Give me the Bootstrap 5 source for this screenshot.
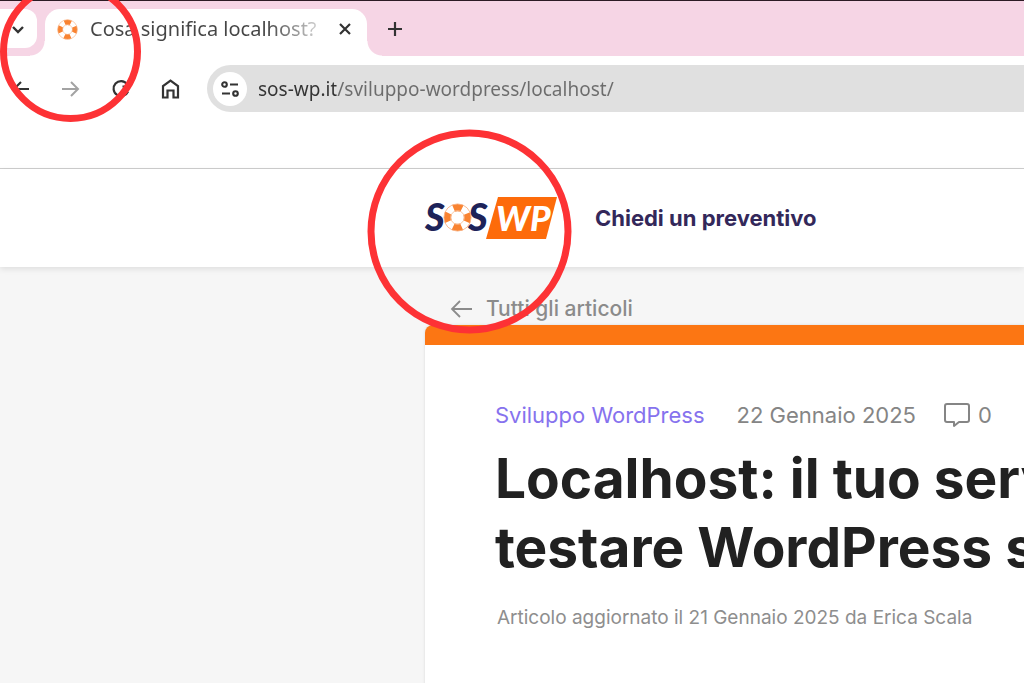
<!DOCTYPE html>
<html lang="it">
<head>
<meta charset="utf-8">
<meta name="viewport" content="width=device-width, initial-scale=1">
<title>Cosa significa localhost?</title>
<link href="https://cdn.jsdelivr.net/npm/bootstrap@5.3.0/dist/css/bootstrap.min.css" rel="stylesheet">
<style>
:root { --pink: #f6d5e5; --orange: #fc7613; --column: 41.5%; }
body { font-family: Inter, "Liberation Sans", sans-serif; background: #f6f6f6; color: #212121; overflow: hidden; }
button { padding: 0; border: 0; background: none; color: #333; line-height: 0; }
a { text-decoration: none; }
svg { display: block; flex: none; overflow: visible; }
.browser-text { font-family: "Noto Sans", "Open Sans", sans-serif; }

.tab-strip { height: 56px; background: var(--pink); border-top: 1px solid #2d1b25; padding-top: 8px; }
.tab-search { position: relative; z-index: 1; width: 37px; height: 39px; background: #fff; border-radius: 0 12px 12px 0; }
.open-tab { position: relative; width: 322px; margin-left: 8px; padding: 0 12px 7px; background: #fff; border-radius: 15px 15px 0 0; }
.open-tab::before, .open-tab::after { content: ""; position: absolute; bottom: 0; width: 15px; height: 15px; }
.open-tab::before { right: 100%; background: radial-gradient(circle at 0 0, var(--pink) 14px, #fff 15px); }
.open-tab::after { left: 100%; background: radial-gradient(circle at 100% 0, var(--pink) 14px, #fff 15px); }
.tab-title { font-size: 20px; line-height: 40px; white-space: nowrap; color: transparent; background: linear-gradient(90deg, #454545 78%, #d0d0d0 100%); -webkit-background-clip: text; background-clip: text; }

.toolbar { height: 113px; padding: 9px 0 0 9px; border-bottom: 1px solid #cfcfcf; }
.nav-buttons { gap: 26px; margin-right: 24px; }
.address { height: 47px; padding-left: 6px; background: #e0e0e0; border-radius: 24px 0 0 24px; }
.site-info { width: 34px; height: 34px; background: #fff; border-radius: 50%; }
.address input { font-size: 19px; height: 40px; padding: 0; margin-left: 11px; border: 0; outline: 0; color: transparent; background: linear-gradient(90deg, #333 78px, #6c6c6c 78px); -webkit-background-clip: text; background-clip: text; }

.site-header { height: 98px; padding-left: var(--column); box-shadow: 0 2px 6px rgba(0,0,0,.1); position: relative; }
.quote-link { margin-left: 38px; font-size: 22px; font-weight: 700; color: #33285a; }
.crumbs { height: 58px; padding: 20px 0 0 calc(var(--column) + 25px); }
.crumbs a { font-size: 21px; line-height: 44px; font-weight: 500; color: #8b8b8b; gap: 13px; }
.post { margin-left: var(--column); min-height: 358px; padding: 54px 0 54px 70px; border-top: 20px solid var(--orange); border-top-left-radius: 8px; box-shadow: 0 0 3px rgba(0,0,0,.12); white-space: nowrap; }
.post-meta { font-size: 22px; line-height: 32px; color: #858585; }
.post-meta a { color: #8672ee; }
.post-meta svg { margin: 0 8px 0 28px; }
.post h1 { font-size: 55px; line-height: 69px; font-weight: 700; margin: 13px 0 19px; }
.byline { font-size: 19px; line-height: 34px; color: #8e8e8e; padding-left: 2px; }
.byline a { color: inherit; }
.marks { position: absolute; left: 0; top: 0; pointer-events: none; z-index: 5; }
</style>
</head>
<body>
<svg width="0" height="0" class="position-absolute" aria-hidden="true">
  <symbol id="buoy" viewBox="0 0 32 32">
    <circle cx="16" cy="16" r="11" fill="none" stroke="#fff" stroke-width="9"/>
    <circle cx="16" cy="16" r="11" fill="none" stroke="#f98331" stroke-width="8" stroke-dasharray="9.5 7.78" stroke-dashoffset="4.75"/>
    <circle cx="16" cy="16" r="15" fill="none" stroke="#f7b488" stroke-width="1"/>
    <circle cx="16" cy="16" r="7.5" fill="none" stroke="#f7c19c" stroke-width="1"/>
  </symbol>
</svg>

<div class="browser-text bg-white">
  <div class="tab-strip d-flex">
    <button class="tab-search ps-2" aria-label="Cerca schede">
      <svg width="20" height="20" viewBox="0 0 20 20" fill="none" stroke="#333" stroke-width="2.4"><path d="M5 8l5 5 5-5"/></svg>
    </button>
    <div class="open-tab d-flex align-items-center">
      <svg width="21" height="21" class="me-2"><use href="#buoy"/></svg>
      <span class="tab-title ms-1">Cosa significa localhost?</span>
      <button class="ms-auto" aria-label="Chiudi scheda">
        <svg width="20" height="20" viewBox="0 0 20 20" fill="none" stroke="#333" stroke-width="2.2"><path d="M5 5l10 10M15 5L5 15"/></svg>
      </button>
    </div>
    <button class="ms-3 ps-1 pb-2" aria-label="Nuova scheda">
      <svg width="16" height="16" viewBox="0 0 16 16" fill="none" stroke="#333" stroke-width="2.2"><path d="M8 1v14M1 8h14"/></svg>
    </button>
  </div>
  <div class="toolbar d-flex align-items-start">
    <div class="nav-buttons d-flex align-items-center pt-2 mt-1">
      <button aria-label="Indietro"><svg width="24" height="24" viewBox="0 0 24 24" fill="none" stroke="#333" stroke-width="2.1"><path d="M20 12H5M12 5l-7 7 7 7"/></svg></button>
      <button aria-label="Avanti"><svg width="24" height="24" viewBox="0 0 24 24" fill="none" stroke="#a3a3a3" stroke-width="2"><path d="M3 12h16M12 5l7 7-7 7"/></svg></button>
      <button aria-label="Ricarica"><svg width="24" height="24" viewBox="0 0 24 24" fill="none" stroke="#333" stroke-width="2.2"><path d="M18 7A7.500 7.500 0 1 0 19 14.500"/><path d="M19.500 3v6.500h-6"/></svg></button>
      <button aria-label="Pagina iniziale"><svg width="24" height="24" viewBox="0 0 24 24" fill="none" stroke="#333" stroke-width="2.2"><path d="M4 20.500V9L11.500 3.500 19 9v11.500h-4.500v-7h-6v7z"/></svg></button>
    </div>
    <div class="address d-flex align-items-center flex-grow-1">
      <button class="site-info d-flex align-items-center justify-content-center" aria-label="Informazioni sul sito">
        <svg width="20" height="20" viewBox="0 0 20 20" fill="none" stroke="#333" stroke-width="2.100"><circle cx="4.500" cy="5.500" r="2.300"/><path d="M10 5.500h8M2 14.500h8"/><circle cx="15.500" cy="14.500" r="2.300"/></svg>
      </button>
      <input class="flex-grow-1" type="text" aria-label="Indirizzo" value="sos-wp.it/sviluppo-wordpress/localhost/">
    </div>
  </div>
</div>

<header class="site-header bg-white d-flex align-items-center">
  <a href="#" aria-label="SOS WP">
    <svg width="132" height="44" viewBox="0 0 132 44" font-family="Lato, sans-serif" font-weight="900" font-style="italic">
      <path d="M73 1h59l-11 42H61z" fill="#fd6b0a"/>
      <text x="0" y="35" font-size="38" fill="#1d2359">S</text>
      <use href="#buoy" x="18" y="7" width="29" height="29"/>
      <text x="43" y="35" font-size="38" fill="#1d2359">S</text>
      <text x="71" y="35" font-size="35" fill="#fff">WP</text>
    </svg>
  </a>
  <a class="quote-link" href="#">Chiedi un preventivo</a>
</header>

<main>
  <nav class="crumbs">
    <a href="#" class="d-inline-flex align-items-center">
      <svg width="23" height="20" viewBox="0 0 23 20" fill="none" stroke="#8b8b8b" stroke-width="1.800"><path d="M22 10H2M10 2l-8 8 8 8"/></svg>
      Tutti gli articoli</a>
  </nav>
  <article class="post bg-white">
    <div class="post-meta d-flex align-items-center">
      <a href="#">Sviluppo WordPress</a>
      <time class="ms-4 ps-2" datetime="2025-01-22">22 Gennaio 2025</time>
      <svg width="26" height="26" viewBox="0 0 26 26" fill="none" stroke="#858585" stroke-width="2" stroke-linejoin="round"><path d="M3 2h20a2 2 0 0 1 2 2v14a2 2 0 0 1-2 2h-8l-5 4v-4H3a2 2 0 0 1-2-2V4a2 2 0 0 1 2-2z"/></svg>
      <span>0</span>
    </div>
    <h1>Localhost: il tuo serv<br>testare WordPress s</h1>
    <div class="byline">Articolo aggiornato il 21 Gennaio 2025 da <a href="#">Erica Scala</a></div>
  </article>
</main>

<svg class="marks" width="580" height="340" fill="none" stroke="#fd3235" stroke-width="7" aria-hidden="true">
  <circle cx="70.500" cy="51.500" r="67"/>
  <circle cx="469.500" cy="231.500" r="98.500"/>
</svg>
<script src="https://cdn.jsdelivr.net/npm/bootstrap@5.3.0/dist/js/bootstrap.bundle.min.js"></script>
</body>
</html>
